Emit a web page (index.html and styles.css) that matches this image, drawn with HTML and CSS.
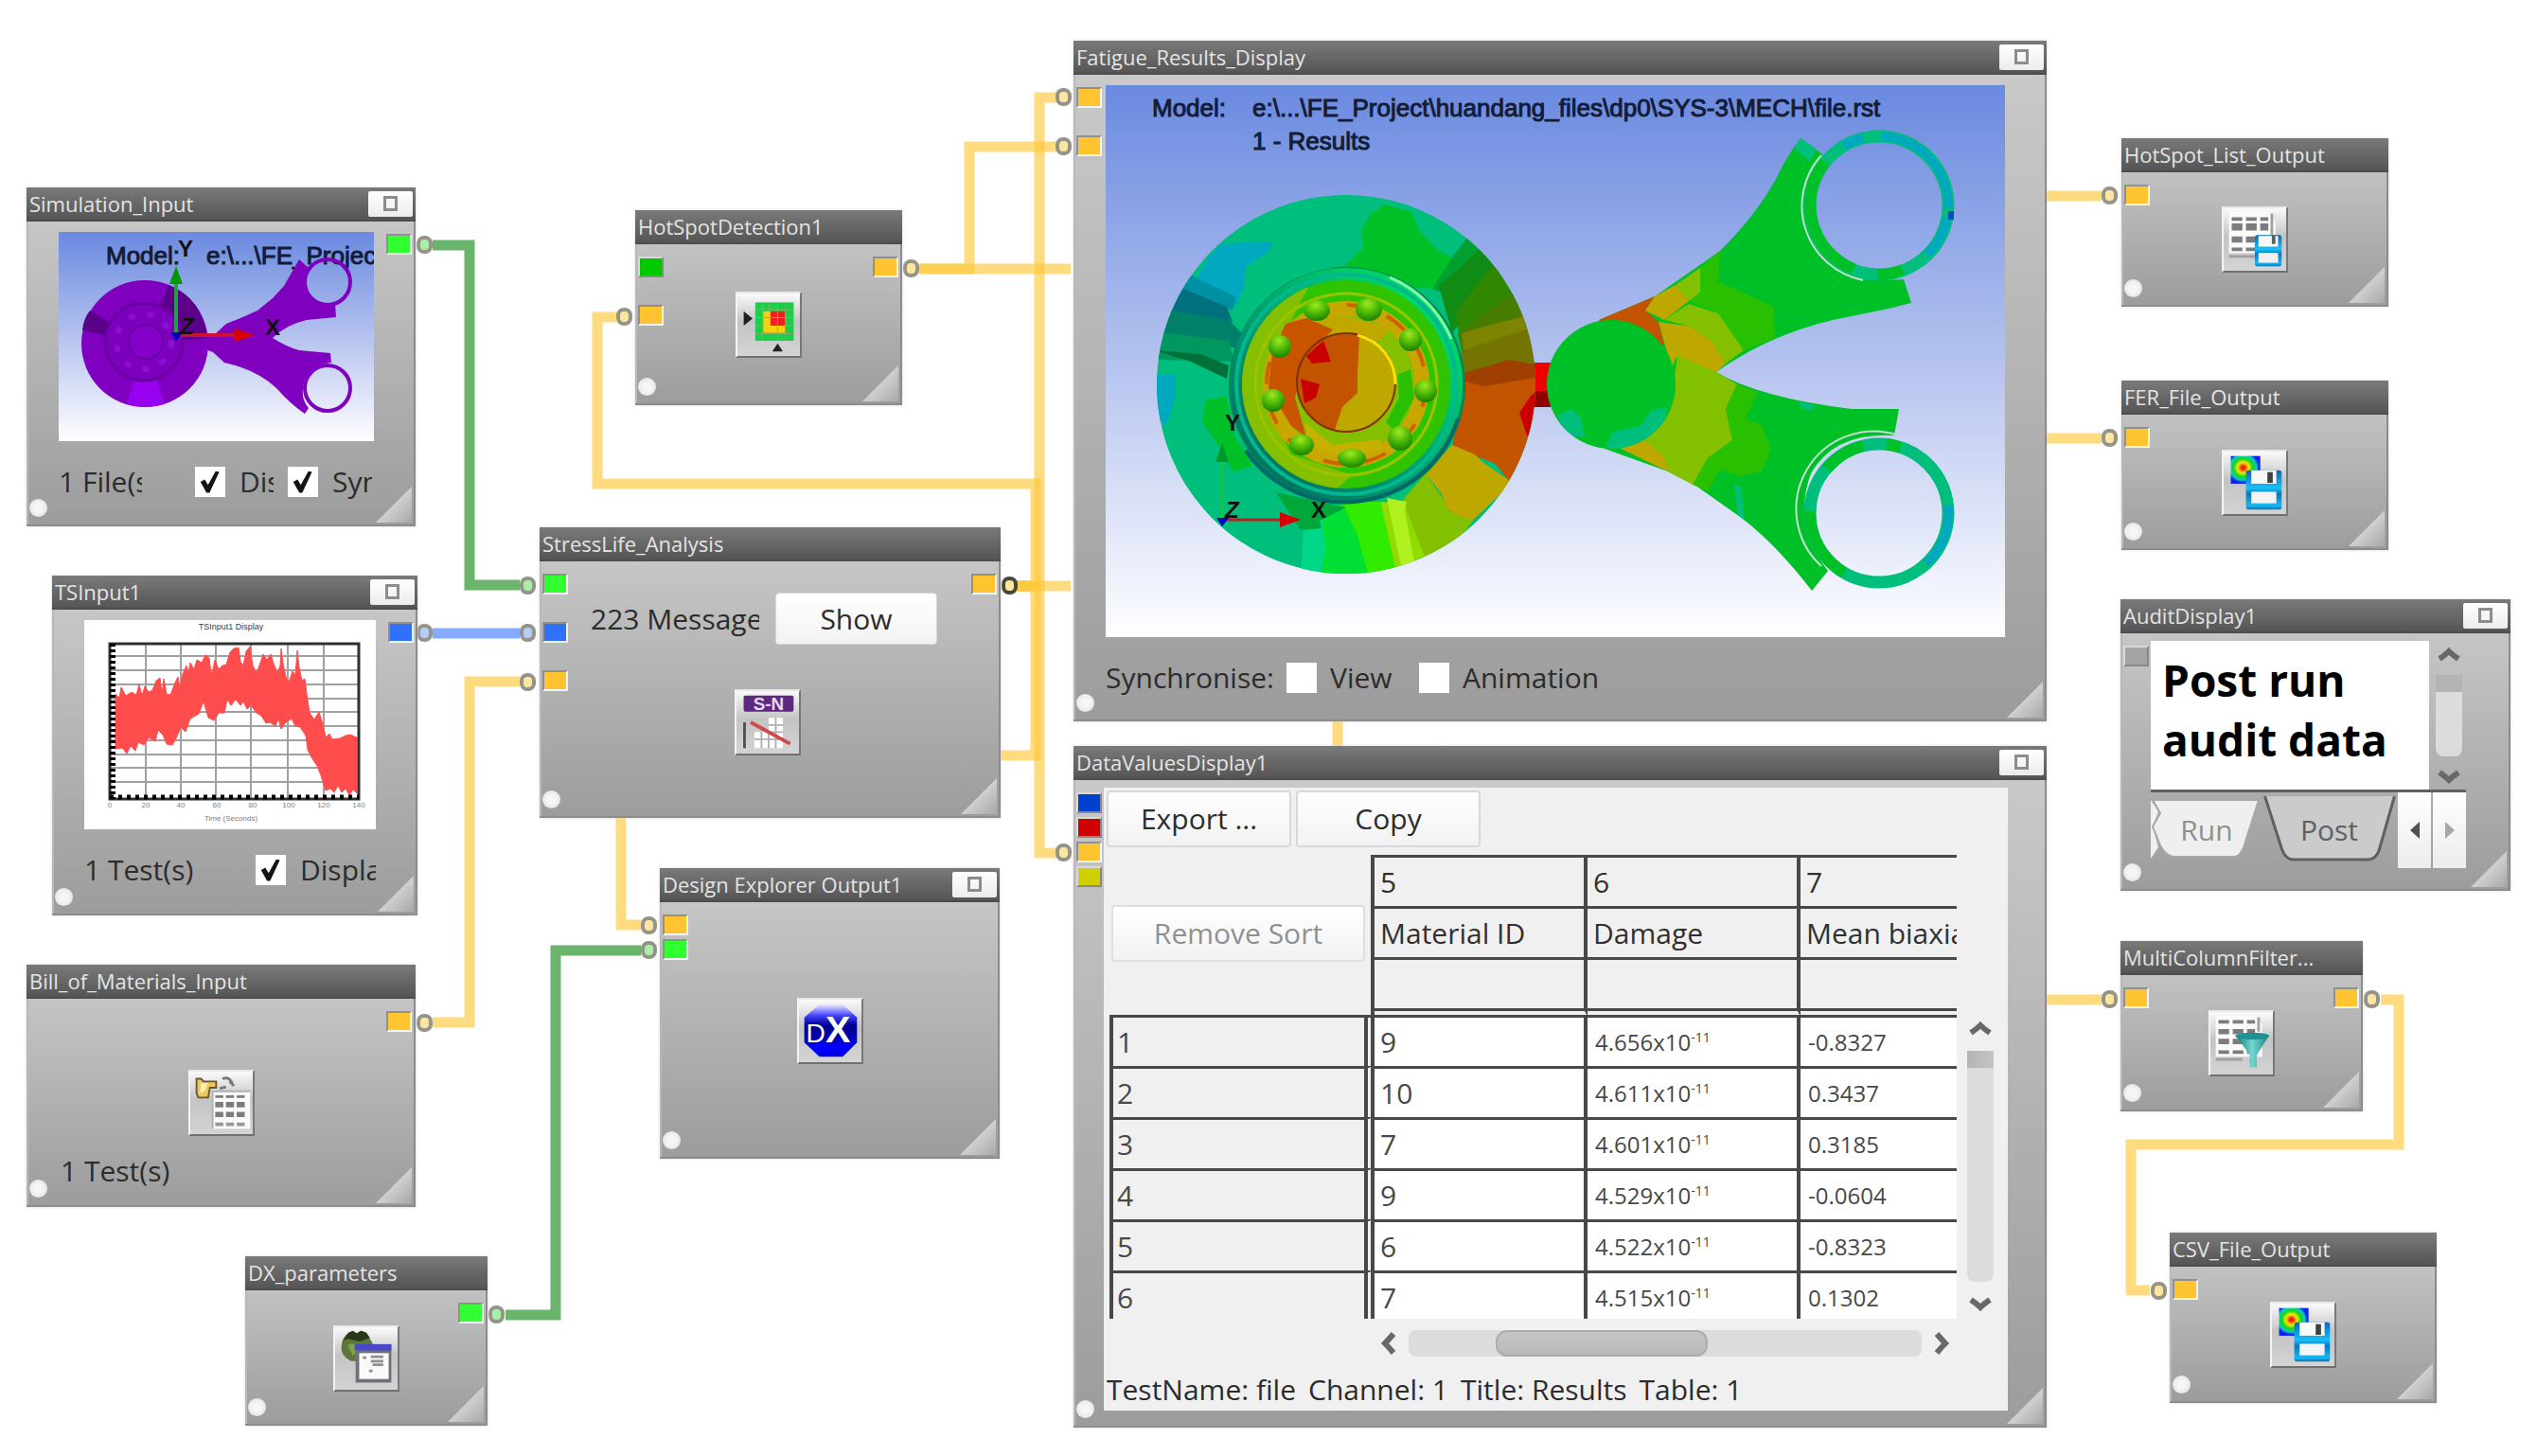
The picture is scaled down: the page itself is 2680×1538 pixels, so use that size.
FILE: index.html
```html
<!DOCTYPE html>
<html lang="en">
<head>
<meta charset="utf-8">
<title>Fatigue analysis process flow</title>
<link rel="stylesheet" href="styles.css">
</head>
<body>
<svg class="defs" aria-hidden="true">
  <defs>
    <linearGradient id="sky" x1="0" y1="0" x2="0" y2="1">
      <stop offset="0" stop-color="#6a8ae0"/><stop offset="0.5" stop-color="#b4c2ee"/><stop offset="1" stop-color="#ffffff"/>
    </linearGradient>
    <linearGradient id="floppyBlue" x1="0" y1="0" x2="0" y2="1">
      <stop offset="0" stop-color="#0a68b0"/><stop offset="0.45" stop-color="#18c0f8"/><stop offset="0.6" stop-color="#0a78c0"/><stop offset="0.9" stop-color="#18b8f0"/><stop offset="1" stop-color="#0a70b8"/>
    </linearGradient>
    <radialGradient id="contour" cx="0.42" cy="0.42" r="0.68">
      <stop offset="0.08" stop-color="#f02010"/><stop offset="0.28" stop-color="#f8e800"/><stop offset="0.48" stop-color="#10d820"/><stop offset="0.66" stop-color="#10c8c0"/><stop offset="0.8" stop-color="#1020f0"/>
    </radialGradient>
    <radialGradient id="ball" cx="0.45" cy="0.25" r="0.75">
      <stop offset="0" stop-color="#a0e820"/><stop offset="0.5" stop-color="#50bc08"/><stop offset="1" stop-color="#1c8000"/>
    </radialGradient>
    <linearGradient id="rim" x1="0" y1="1" x2="1" y2="0">
      <stop offset="0" stop-color="#006058"/><stop offset="0.45" stop-color="#00a070"/><stop offset="1" stop-color="#00f060"/>
    </linearGradient>
    <linearGradient id="dxBlue" x1="0" y1="0" x2="0" y2="1">
      <stop offset="0" stop-color="#f0f0ff"/><stop offset="0.22" stop-color="#4040ff"/><stop offset="0.4" stop-color="#000090"/><stop offset="0.65" stop-color="#0000b0"/><stop offset="0.8" stop-color="#0000ff"/><stop offset="1" stop-color="#0000e8"/>
    </linearGradient>
    <linearGradient id="funnel" x1="0" y1="0" x2="1" y2="0">
      <stop offset="0" stop-color="#107878"/><stop offset="0.5" stop-color="#70d8d0"/><stop offset="1" stop-color="#148080"/>
    </linearGradient>
    <symbol id="fileContour" viewBox="0 0 70 70">
      <rect x="8" y="5" width="33" height="31" fill="url(#contour)"/>
      <rect x="25" y="21" width="40" height="44" rx="3" fill="url(#floppyBlue)"/>
      <rect x="31" y="21" width="28" height="15" fill="#f8f8f8"/><rect x="49" y="23" width="6" height="12" fill="#404040"/>
      <rect x="31" y="45" width="28" height="13" fill="#f4f4f4"/>
    </symbol>
  </defs>
</svg>

<main class="canvas">
  <svg class="cables" aria-hidden="true">
    <g class="cable cable-yellow">
      <path d="M457 1080H496V720H549"/>
      <path d="M971 284H1131"/><path d="M971 284H1024V155H1116"/>
      <path d="M1074 619H1098V103H1116"/><path d="M1074 619H1094V511H631V335H651"/>
      <path d="M1074 619H1094V798H656V977H677"/><path d="M1074 619H1098V901H1116"/><path d="M1103 619H1131"/>
      <path d="M1413 755V795"/>
      <path d="M2155 207H2220"/><path d="M2155 463H2220"/><path d="M2155 1056H2220"/>
      <path d="M2515 1056H2534V1209H2251V1363H2271"/>
    </g>
    <g class="cable cable-green"><path d="M457 259H496V618H549"/><path d="M534 1389H587V1004H677"/></g>
    <g class="cable cable-blue"><path d="M457 669H549"/></g>
    <g class="knob knob-yellow">
      <rect x="442" y="1073" width="13" height="15" rx="6"/><rect x="551" y="713" width="13" height="15" rx="6"/>
      <rect x="956" y="276" width="13" height="15" rx="6"/><rect x="653" y="327" width="13" height="15" rx="6"/>
      <rect x="1060" y="611" width="13" height="15" rx="6" class="knob-dark"/>
      <rect x="1117" y="95" width="13" height="15" rx="6"/><rect x="1117" y="147" width="13" height="15" rx="6"/><rect x="1117" y="893" width="13" height="15" rx="6"/>
      <rect x="679" y="970" width="13" height="15" rx="6"/>
      <rect x="2222" y="199" width="13" height="15" rx="6"/><rect x="2222" y="455" width="13" height="15" rx="6"/><rect x="2222" y="1048" width="13" height="15" rx="6"/>
      <rect x="2499" y="1048" width="13" height="15" rx="6"/><rect x="2274" y="1356" width="13" height="15" rx="6"/>
    </g>
    <g class="knob knob-green">
      <rect x="442" y="251" width="13" height="15" rx="6"/><rect x="551" y="611" width="13" height="15" rx="6"/>
      <rect x="518" y="1381" width="13" height="15" rx="6"/><rect x="679" y="996" width="13" height="15" rx="6"/>
    </g>
    <g class="knob knob-blue"><rect x="442" y="661" width="13" height="15" rx="6"/><rect x="551" y="661" width="13" height="15" rx="6"/></g>
  </svg>

  <section class="node n-sim">
    <header class="node-title"><h2>Simulation_Input</h2><button class="max" aria-label="Maximise Simulation_Input"></button></header>
    <div class="node-body">
      <div class="ports"></div>
      <div class="content">
        <svg class="view view-small" viewBox="0 0 333 221" role="img" aria-label="Model preview">
          <rect width="333" height="221" fill="url(#sky)"/>
          <g class="model-text"><text x="50" y="34">Model:</text><text x="156" y="34">e:\...\FE_Project</text></g>
          <circle cx="91" cy="118" r="67" fill="#8000c0"/>
          <path d="M91 118L25 104Q26 92 33 83Z" fill="#5a0088"/><path d="M91 118L116 56Q152 70 157 112Z" fill="#5c008c"/>
          <path d="M91 118L72 182Q91 187 112 182Z" fill="#9800f0"/>
          <circle cx="90" cy="116" r="41" fill="#7c00bc" stroke="#6a00a0" stroke-width="3"/>
          <circle cx="90" cy="116" r="29" fill="none" stroke="#8c10d0" stroke-width="6" stroke-dasharray="7 13"/>
          <circle cx="92" cy="116" r="18" fill="#8400c8" stroke="#6a00a4" stroke-width="2"/>
          <path d="M155 112L165 108L177 97L192 91L210 83L226 70L238 57L254 29L264 38Q254 56 267 72Q280 82 292 76L293 90L262 93Q240 98 226 112Q240 121 254 125L287 128L288 138Q268 140 260 155Q254 175 264 186L260 192Q245 182 230 165Q210 146 175 138L163 127L155 124Z" fill="#8000c0"/>
          <circle cx="284" cy="53" r="24" fill="none" stroke="#8000c0" stroke-width="4"/>
          <circle cx="284" cy="165" r="24" fill="none" stroke="#8000c0" stroke-width="4"/>
          <path d="M124 108V52" stroke="#20a040" stroke-width="4"/><path d="M124 36L131 55H117Z" fill="#009800"/>
          <path d="M124 109H190" stroke="#d01030" stroke-width="4"/><path d="M207 109L186 102V116Z" fill="#d80000"/>
          <path d="M118 106H131L124 116Z" fill="#0000c0"/>
          <g class="axis-text"><text x="126" y="26">Y</text><text x="218" y="109">X</text><text x="128" y="108" class="italic">Z</text></g>
        </svg>
        <div class="row row-sim">
          <span class="clip">1 File(s)</span>
          <input type="checkbox" id="simDisplay" checked><label class="clip" for="simDisplay">Display</label>
          <input type="checkbox" id="simSync" checked><label class="clip" for="simSync">Synch</label>
        </div>
      </div>
      <div class="ports ports-out"><i class="port lime"></i></div>
    </div>
    <i class="dot"></i><i class="grip"></i>
  </section>

  <section class="node n-ts">
    <header class="node-title"><h2>TSInput1</h2><button class="max" aria-label="Maximise TSInput1"></button></header>
    <div class="node-body">
      <div class="ports"></div>
      <div class="content">
        <svg class="view view-small" viewBox="0 0 308 221" role="img" aria-label="Time series chart">
          <rect width="308" height="221" fill="#fff"/>
          <g class="tiny"><text x="155" y="10">TSInput1 Display</text><text x="155" y="212" class="faint">Time (Seconds)</text></g>
          <g class="tiny faint"><text x="27" y="198">0</text><text x="65" y="198">20</text><text x="102" y="198">40</text><text x="140" y="198">60</text><text x="178" y="198">80</text><text x="216" y="198">100</text><text x="253" y="198">120</text><text x="290" y="198">140</text></g>
          <path d="M65 25V189M102 25V189M139 25V189M176 25V189M215 25V189M253 25V189M27 38H290M27 53H290M27 68H290M27 83H290M27 97H290M27 112H290M27 127H290M27 142H290M27 156H290M27 171H290" stroke="#a0a0a0" stroke-width="2" fill="none"/>
          <path d="M33 78L37 82L39 71L44 80L50 76L55 79L58 68L61 80L64 70L68 76L72 74L76 64L80 61L82 78L84 62L87 78L91 79L96 66L99 60L101 72L104 57L108 48L110 56L112 45L116 52L119 42L124 45L128 37L132 40L134 58L136 52L138 42L142 52L146 48L150 47L154 34L158 30L163 29L165 44L168 48L171 33L175 28L178 48L182 56L186 45L189 36L193 42L197 36L200 46L204 56L207 48L208 30L210 46L213 60L216 66L220 54L223 58L225 32L227 50L230 64L233 62L235 78L238 98L243 105L248 97L252 110L255 124L259 120L262 126L270 125L276 122L281 121L288 124V183L284 179L280 185L276 178L272 182L268 175L264 182L260 178L255 180L250 164L246 154L240 145L236 137L234 122L228 113L223 112L219 104L213 108L208 115L205 104L202 112L196 108L192 109L187 101L182 98L176 90L172 94L168 86L165 90L160 84L155 90L151 84L148 98L142 98L137 106L131 103L126 86L121 99L112 104L107 118L102 113L97 125L93 132L87 131L83 121L78 116L75 128L68 124L63 132L57 129L54 138L49 133L45 141L40 135L33 136Z" fill="#ff4d4d" stroke="#ff4d4d" stroke-width="1"/>
          <path d="M27 25H290V189H27Z" fill="none" stroke="#303030" stroke-width="3"/>
          <path d="M30 25V189" stroke="#000" stroke-width="6" stroke-dasharray="3 3"/><path d="M27 187H290" stroke="#000" stroke-width="5" stroke-dasharray="4 5"/>
        </svg>
        <div class="row row-ts">
          <span class="clip">1 Test(s)</span>
          <input type="checkbox" id="tsDisplay" checked><label class="clip" for="tsDisplay">Display</label>
        </div>
      </div>
      <div class="ports ports-out"><i class="port blue"></i></div>
    </div>
    <i class="dot"></i><i class="grip"></i>
  </section>

  <section class="node n-bill">
    <header class="node-title"><h2>Bill_of_Materials_Input</h2></header>
    <div class="node-body with-icon">
      <div class="ports"></div>
      <div class="content">
        <svg class="icon" viewBox="0 0 70 70" aria-hidden="true">
          <path d="M7 8H12L15 11H29V18H22L20 29H9L7 24Z" fill="#e8c860" stroke="#6c5828" stroke-width="2"/><path d="M12 13H20L16 22L11 24Z" fill="#fff0b0"/>
          <path d="M36 8Q44 5 47 13M49 16L44 11M33 19L40 17" fill="none" stroke="#787878" stroke-width="3"/>
          <rect x="25" y="22" width="42" height="42" fill="#fafafa"/><path d="M25 64V22H67" fill="none" stroke="#b0b0b0" stroke-width="2"/>
          <g stroke="#7c7c7c" stroke-dasharray="9 3"><path d="M28 28H64" stroke-width="3"/><path d="M28 37H64" stroke-width="6"/><path d="M28 48H64" stroke-width="6"/><path d="M28 59H64" stroke-width="4" stroke="#989898"/></g>
        </svg>
        <span class="note">1 Test(s)</span>
      </div>
      <div class="ports ports-out"><i class="port orange"></i></div>
    </div>
    <i class="dot"></i><i class="grip"></i>
  </section>

  <section class="node n-dx">
    <header class="node-title"><h2>DX_parameters</h2></header>
    <div class="node-body with-icon">
      <div class="ports"></div>
      <div class="content">
        <svg class="icon" viewBox="0 0 70 70" aria-hidden="true">
          <path d="M15 6L20 4L24 7L29 4L35 6L42 18V24L26 38L18 38Q6 32 7 22Q7 12 15 6Z" fill="#5c7838"/><path d="M15 6L20 4L24 7L29 4L35 6L39 12L28 16L14 13L9 15Z" fill="#283818"/><path d="M14 20Q22 16 26 24L20 32Z" fill="#80a050"/>
          <rect x="23" y="19" width="40" height="43" fill="#707078"/><rect x="22" y="19" width="41" height="7" fill="#4848c8"/><rect x="27" y="29" width="33" height="29" fill="#fafafa"/>
          <path d="M31 34H35M40 33H54M40 38H54M42 42H54M38 49H42" stroke="#909090" stroke-width="3"/>
        </svg>
      </div>
      <div class="ports ports-out"><i class="port lime"></i></div>
    </div>
    <i class="dot"></i><i class="grip"></i>
  </section>

  <section class="node n-hot">
    <header class="node-title"><h2>HotSpotDetection1</h2></header>
    <div class="node-body with-icon">
      <div class="ports"><i class="port green"></i><i class="port orange"></i></div>
      <div class="content">
        <svg class="icon" viewBox="0 0 70 70" aria-hidden="true">
          <rect x="20" y="10" width="43" height="43" fill="#18d048"/><rect x="29" y="20" width="24" height="24" fill="#f8d010"/><rect x="37" y="20" width="16" height="16" fill="#f02020"/>
          <path d="M28 10V53M36 10V20M45 10V53M54 10V53M20 18H63M20 27H63M20 36H28M54 36H63M20 45H63" stroke="#90a870" stroke-width="1"/>
          <path d="M7 20L17 28L7 36Z" fill="#202020"/><path d="M39 65L45 56L51 65Z" fill="#202020"/>
        </svg>
      </div>
      <div class="ports ports-out"><i class="port orange"></i></div>
    </div>
    <i class="dot"></i><i class="grip"></i>
  </section>

  <section class="node n-stress">
    <header class="node-title"><h2>StressLife_Analysis</h2></header>
    <div class="node-body with-icon">
      <div class="ports"><i class="port lime"></i><i class="port blue"></i><i class="port orange"></i></div>
      <div class="content">
        <div class="row row-messages"><span class="clip">223 Messages</span><button class="btn">Show</button></div>
        <svg class="icon" viewBox="0 0 70 70" aria-hidden="true">
          <rect x="8" y="5" width="56" height="18" rx="2" fill="#5c2880"/><text x="36" y="21" class="sn">S-N</text>
          <path d="M9 35V64" stroke="#505050" stroke-width="3"/><path d="M36 30H52V64H20V46H36Z" fill="#fff"/><path d="M20 54H52M28 46V64M36 38H52M36 46H52M44 30V64M36 46V64" stroke="#b0b0b0" stroke-width="2"/>
          <path d="M16 35L60 59" stroke="#d04848" stroke-width="4"/>
        </svg>
      </div>
      <div class="ports ports-out"><i class="port orange"></i></div>
    </div>
    <i class="dot"></i><i class="grip"></i>
  </section>

  <section class="node n-design">
    <header class="node-title"><h2>Design Explorer Output1</h2><button class="max" aria-label="Maximise Design Explorer Output1"></button></header>
    <div class="node-body with-icon">
      <div class="ports tight"><i class="port orange"></i><i class="port lime"></i></div>
      <div class="content">
        <svg class="icon" viewBox="0 0 70 70" aria-hidden="true">
          <path d="M23 5H49L65 20V48L49 64H23L6 48V20Z" fill="url(#dxBlue)"/>
          <text x="8" y="48" class="dx">D<tspan class="dx-x">X</tspan></text>
        </svg>
      </div>
      <div class="ports"></div>
    </div>
    <i class="dot"></i><i class="grip"></i>
  </section>

  <section class="node n-fatigue">
    <header class="node-title"><h2>Fatigue_Results_Display</h2><button class="max" aria-label="Maximise Fatigue_Results_Display"></button></header>
    <div class="node-body">
      <div class="ports"><i class="port orange"></i><i class="port orange"></i></div>
      <div class="content">
        <svg class="view view-large" viewBox="0 0 950 583" role="img" aria-label="Fatigue life contour plot">
          <clipPath id="discClip"><circle cx="254" cy="316" r="200"/></clipPath>
          <clipPath id="raceClip"><circle cx="254" cy="316" r="110"/></clipPath>
          <clipPath id="hubClip"><circle cx="254" cy="314" r="52"/></clipPath>
          <clipPath id="capClip"><circle cx="534" cy="316" r="68"/></clipPath>
          <rect width="950" height="583" fill="url(#sky)"/>
          <g class="model-text"><text x="49" y="33">Model:</text><text x="155" y="33">e:\...\FE_Project\huandang_files\dp0\SYS-3\MECH\file.rst</text><text x="155" y="68">1 - Results</text></g>
          <rect x="450" y="293" width="20" height="30" fill="#f00000"/><rect x="450" y="323" width="20" height="17" fill="#900000"/>
          <g clip-path="url(#discClip)">
            <rect x="50" y="110" width="410" height="410" fill="#00be7c"/>
            <path d="M200 208L235 194L254 190L266 177L272 172L270 153L280 136L295 126L323 134L331 153L348 172L366 182L350 215Z" fill="#00c028"/>
            <path d="M366 182L390 150L420 170L380 230L345 215Z" fill="#00a030"/>
            <path d="M352 212L405 165L430 190L390 230L366 262Z" fill="#108c14"/>
            <path d="M370 240L420 175L460 230L375 275Z" fill="#2f8800"/><path d="M372 262L450 205L465 250L378 290Z" fill="#487c00"/>
            <path d="M376 282L450 236L470 300L377 308Z" fill="#747400"/><path d="M376 262L410 252L470 238L462 252L378 280Z" fill="#7c8400"/>
            <path d="M377 304L410 295L425 290L460 296V320L377 322Z" fill="#a04000"/>
            <path d="M376 312L400 318L460 308V420L427 420L412 400L366 382L372 350Z" fill="#c25400"/><path d="M460 320L449 328L437 346L445 370H460Z" fill="#c80000"/>
            <path d="M366 380L390 390L398 398L430 420L385 462L360 448L355 432L338 410Z" fill="#bea800"/>
            <path d="M338 410L355 435L362 450L388 460L340 525L312 440Z" fill="#82c000"/>
            <path d="M290 440L315 442L340 505L308 520Z" fill="#90dc00"/><path d="M297 436L318 440L316 450L326 504L312 508Z" fill="#b0f020"/>
            <path d="M246 440L290 440L308 520H278Z" fill="#32ec00"/><path d="M226 444L250 442L266 475L278 520H226Q236 490 224 470Z" fill="#00e034"/>
            <path d="M210 452L228 450L232 490L226 520H206Z" fill="#00d888"/>
            <path d="M110 180L123 167L177 165L170 178L148 191L146 213L138 232L95 205Z" fill="#00a8c0"/>
            <path d="M80 196L138 224L134 238L78 215Z" fill="#0090a4"/><path d="M70 210L128 234L134 250L60 240Z" fill="#00707e"/>
            <path d="M60 236L130 248L146 264L140 278L50 262Z" fill="#008068"/><path d="M50 260L130 270L136 292L50 290Z" fill="#009860"/><path d="M52 280L100 284L130 296L128 310L90 292Z" fill="#007038"/>
            <path d="M50 305H73L74 328L64 360L50 350Z" fill="#00a8c0"/>
            <path d="M105 333L127 328L137 372L156 402L134 408L124 388L102 356Z" fill="#00c028"/>
            <path d="M180 430L254 446L226 460L228 468L206 470L190 446Z" fill="#00a83c"/>
          </g>
          <circle cx="255" cy="317" r="125" fill="#008850"/><circle cx="254" cy="316" r="123" fill="url(#rim)"/>
          <circle cx="254" cy="316" r="116" fill="none" stroke="#00b890" stroke-width="4"/>
          <path d="M148 386A126 126 0 0 0 372 352" fill="none" stroke="#006868" stroke-width="4"/>
          <path d="M300 203A121 121 0 0 1 365 268" fill="none" stroke="#80ffa8" stroke-width="3"/>
          <g clip-path="url(#raceClip)">
            <rect x="144" y="206" width="220" height="220" fill="#30c400"/>
            <path d="M144 206H218L200 240L180 290L176 350L196 390L260 412L240 430H144Z" fill="#84c000"/>
            <circle cx="254" cy="316" r="80" fill="none" stroke="#c8a800" stroke-width="16"/>
            <circle cx="254" cy="316" r="84" fill="none" stroke="#d06000" stroke-width="4" stroke-dasharray="24 20"/>
            <circle cx="254" cy="316" r="72" fill="#84c000"/>
            <path d="M254 244A72 72 0 0 0 190 282L200 300L215 275L254 262L290 270L300 256Z" fill="#c0a800"/>
            <path d="M176 282L190 252L212 246L240 258L210 290L200 330L212 372L196 360L172 320Z" fill="#c85400"/>
            <path d="M210 356L240 380L290 374L292 384L254 392L214 382Z" fill="#c8b000"/>
            <path d="M308 306L322 300L326 330L306 366L296 356L310 330Z" fill="#28c000"/>
          </g>
          <circle cx="254" cy="316" r="96" fill="none" stroke="#98c400" stroke-width="3"/>
          <g fill="url(#ball)"><ellipse cx="223" cy="238" rx="14" ry="11"/><ellipse cx="278" cy="237" rx="14" ry="12"/><circle cx="322" cy="269" r="12"/><circle cx="338" cy="323" r="12"/><circle cx="311" cy="373" r="13"/><ellipse cx="260" cy="394" rx="15" ry="10"/><ellipse cx="207" cy="380" rx="13" ry="11"/><circle cx="177" cy="333" r="12"/><circle cx="184" cy="276" r="12"/></g>
          <g clip-path="url(#hubClip)"><rect x="200" y="260" width="110" height="110" fill="#c25400"/><path d="M268 264H310V370H240L250 340L266 325L266 305Z" fill="#bea800"/><path d="M212 286L230 270L238 292L218 294ZM206 310L226 316L222 330L210 336Z" fill="#c80000"/></g>
          <circle cx="254" cy="314" r="52" fill="none" stroke="#803000" stroke-width="2"/><path d="M266 264A52 52 0 0 1 306 316" fill="none" stroke="#ffe000" stroke-width="3"/>

          <path d="M521 248L580 223L649 175Q689 135 709 97Q720 74 734 56L760 75Q725 120 750 170Q780 210 843 205L851 230L827 236L768 248Q700 264 645 303Q690 330 788 342H838L833 370Q770 366 745 410Q725 465 763 513L746 534Q709 486 673 458L622 422L594 408L527 384Z" fill="#00c028"/>
          <path d="M521 248L580 223L570 238L584 250L590 275L560 270Z" fill="#c25400"/>
          <path d="M570 238L580 223L602 211L616 228L590 248Z" fill="#bea800"/><path d="M602 211L628 193V219L616 228Z" fill="#82c000"/>
          <path d="M628 193L649 175L647 208L669 217L705 234L707 267L674 280L647 241L616 228L628 219Z" fill="#28c000"/>
          <path d="M590 248L616 231L647 241L674 280L655 294L641 271L618 255Z" fill="#82c000"/>
          <path d="M584 250L618 255L641 271L655 294L645 303L602 288L598 300Z" fill="#bea800"/>
          <path d="M604 285L645 303L667 316L655 342L662 375L636 394L620 422L594 408L590 392L560 375L598 330Z" fill="#82c000"/>
          <path d="M667 316L689 324L676 352L693 359L703 385L693 408L669 413L649 406L636 429L620 422L636 394L662 375L655 342Z" fill="#28c000"/>
          <path d="M540 382L570 376L590 392L594 408Z" fill="#bea800"/>
          <path d="M734 56L728 67L744 81L750 67ZM664 422L671 424L675 460L668 454ZM732 334L750 338L746 343L736 342Z" fill="#00be7c"/>
          <circle cx="534" cy="316" r="68" fill="#00c028"/>
          <g clip-path="url(#capClip)" fill="#00be7c"><path d="M478 348L492 342L502 352L506 372L480 370Z"/><path d="M528 384L536 366L565 360L576 344L592 340V384Z"/></g>
          <g fill="none">
            <circle cx="817" cy="127" r="73" stroke="#00be7c" stroke-width="13"/><circle cx="817" cy="452" r="73" stroke="#00be7c" stroke-width="13"/>
            <path d="M760 81A73 73 0 0 0 790 194M815 200A73 73 0 0 0 842 195M762 405A73 73 0 0 1 800 381M744 450A73 73 0 0 0 780 515M825 379A73 73 0 0 1 840 383" stroke="#00c028" stroke-width="12"/>
            <path d="M780 64A73 73 0 0 1 800 56M820 54A73 73 0 0 1 890 130M889 140A73 73 0 0 1 867 179M890 444A73 73 0 0 1 867 505" stroke="#00a8c0" stroke-width="9"/>
            <path d="M893 133V142" stroke="#0050c0" stroke-width="6"/>
            <path d="M756 74A80 80 0 0 0 800 206M838 370A82 82 0 0 0 756 508" stroke="#c0e0d0" stroke-width="2"/>
          </g>
          <path d="M123 460V395" stroke="#10c840" stroke-width="3"/><path d="M123 378L130 398H116Z" fill="#009828"/>
          <path d="M123 459H188" stroke="#c02020" stroke-width="3"/><path d="M206 459L184 451V467Z" fill="#d80000"/><path d="M117 457H130L123 466Z" fill="#0000c0"/>
          <g class="axis-text"><text x="126" y="365">Y</text><text x="217" y="457">X</text><text x="126" y="457" class="italic">Z</text></g>
        </svg>
        <div class="row row-fatigue">
          <span>Synchronise:</span>
          <input type="checkbox" id="syncView"><label for="syncView">View</label>
          <input type="checkbox" id="syncAnim"><label for="syncAnim">Animation</label>
        </div>
      </div>
      <div class="ports"></div>
    </div>
    <i class="dot"></i><i class="grip"></i>
  </section>

  <section class="node n-data">
    <header class="node-title"><h2>DataValuesDisplay1</h2><button class="max" aria-label="Maximise DataValuesDisplay1"></button></header>
    <div class="node-body">
      <div class="ports tight"><i class="port navy"></i><i class="port red"></i><i class="port orange"></i><i class="port olive"></i></div>
      <div class="panel">
        <div class="toolbar"><button class="btn">Export ...</button><button class="btn">Copy</button></div>
        <div class="grid-area">
          <div class="table-clip">
            <table>
              <colgroup><col class="c-row"><col class="c-val"><col class="c-val"><col class="c-val"></colgroup>
              <thead>
                <tr><td rowspan="3" class="corner"><button class="btn btn-wide" disabled>Remove Sort</button></td><th>5</th><th>6</th><th>7</th></tr>
                <tr><th>Material ID</th><th>Damage</th><th>Mean biaxiality</th></tr>
                <tr class="last"><th></th><th></th><th></th></tr>
              </thead>
              <tbody>
                <tr><th scope="row">1</th><td>9</td><td class="num">4.656x10<sup>-11</sup></td><td class="num">-0.8327</td></tr>
                <tr><th scope="row">2</th><td>10</td><td class="num">4.611x10<sup>-11</sup></td><td class="num">0.3437</td></tr>
                <tr><th scope="row">3</th><td>7</td><td class="num">4.601x10<sup>-11</sup></td><td class="num">0.3185</td></tr>
                <tr><th scope="row">4</th><td>9</td><td class="num">4.529x10<sup>-11</sup></td><td class="num">-0.0604</td></tr>
                <tr><th scope="row">5</th><td>6</td><td class="num">4.522x10<sup>-11</sup></td><td class="num">-0.8323</td></tr>
                <tr><th scope="row">6</th><td>7</td><td class="num">4.515x10<sup>-11</sup></td><td class="num">0.1302</td></tr>
              </tbody>
            </table>
          </div>
          <div class="vscroll">
            <button class="arrow" aria-label="Scroll up"><svg viewBox="0 0 28 18"><path d="M4 13Q10 9 14 5Q18 9 24 13"/></svg></button>
            <div class="track"><div class="thumb"></div></div>
            <button class="arrow" aria-label="Scroll down"><svg viewBox="0 0 28 18"><path d="M4 5Q10 9 14 13Q18 9 24 5"/></svg></button>
          </div>
        </div>
        <div class="hscroll">
          <button class="arrow" aria-label="Scroll left"><svg viewBox="0 0 18 28"><path d="M14 4Q9 10 5 14Q9 18 14 24"/></svg></button>
          <div class="track"><div class="thumb"></div></div>
          <button class="arrow" aria-label="Scroll right"><svg viewBox="0 0 18 28"><path d="M4 4Q9 10 13 14Q9 18 4 24"/></svg></button>
        </div>
        <p class="status"><span>TestName: file</span><span>Channel: 1</span><span>Title: Results</span><span>Table: 1</span></p>
      </div>
      <div class="ports"></div>
    </div>
    <i class="dot"></i><i class="grip"></i>
  </section>

  <section class="node n-list">
    <header class="node-title"><h2>HotSpot_List_Output</h2></header>
    <div class="node-body with-icon">
      <div class="ports"><i class="port orange"></i></div>
      <div class="content">
        <svg class="icon" viewBox="0 0 70 70" aria-hidden="true">
          <path d="M6 4H50L58 14V50H6Z" fill="#fafafa"/><path d="M6 54H36M54 6V30" stroke="#a0a0a0" stroke-width="3"/>
          <g stroke="#7c7c7c" stroke-dasharray="12 4" stroke-width="4"><path d="M9 12H50"/><path d="M9 21H50" stroke-width="8"/><path d="M9 35H50" stroke-width="7"/><path d="M9 46H50"/></g>
          <rect x="35" y="30" width="30" height="35" rx="3" fill="url(#floppyBlue)"/><rect x="39" y="31" width="22" height="12" fill="#f8f8f8"/><rect x="54" y="30" width="4" height="10" fill="#606060"/><rect x="39" y="50" width="22" height="11" fill="#f0f0f0"/>
        </svg>
      </div>
      <div class="ports"></div>
    </div>
    <i class="dot"></i><i class="grip"></i>
  </section>

  <section class="node n-fer">
    <header class="node-title"><h2>FER_File_Output</h2></header>
    <div class="node-body with-icon">
      <div class="ports"><i class="port orange"></i></div>
      <div class="content"><svg class="icon" aria-hidden="true"><use href="#fileContour"/></svg></div>
      <div class="ports"></div>
    </div>
    <i class="dot"></i><i class="grip"></i>
  </section>

  <section class="node n-audit">
    <header class="node-title"><h2>AuditDisplay1</h2><button class="max" aria-label="Maximise AuditDisplay1"></button></header>
    <div class="node-body">
      <div class="ports"><i class="port gray"></i></div>
      <div class="content">
        <div class="audit-view">
          <p class="audit-text">Post run<br>audit data</p>
          <div class="vscroll">
            <button class="arrow" aria-label="Scroll up"><svg viewBox="0 0 28 18"><path d="M4 13Q10 9 14 5Q18 9 24 13"/></svg></button>
            <div class="track"><div class="thumb"></div></div>
            <button class="arrow" aria-label="Scroll down"><svg viewBox="0 0 28 18"><path d="M4 5Q10 9 14 13Q18 9 24 5"/></svg></button>
          </div>
        </div>
        <div class="tabs">
          <button class="tab tab-run"><svg viewBox="0 0 118 80" aria-hidden="true"><path d="M0 8L8 20L2 36L8 58L0 70" fill="#f0f0f0"/><path d="M2 8H114L98 58Q94 68 88 68H24Q15 66 10 56L2 36L10 22Z" fill="#efefef" stroke="#a8a8a8" stroke-width="2"/></svg><span>Run</span></button>
          <button class="tab tab-post"><svg viewBox="0 0 140 80" aria-hidden="true"><path d="M2 4L20 60Q24 71 32 71H112Q120 70 123 60L139 4" fill="#cbcbcb" stroke="#606060" stroke-width="3"/></svg><span>Post</span></button>
          <button class="step" aria-label="Previous tab"><svg viewBox="0 0 12 18"><path d="M11 0V18L1 9Z" fill="#505050"/></svg></button>
          <button class="step" aria-label="Next tab"><svg viewBox="0 0 12 18"><path d="M1 0V18L11 9Z" fill="#a8a8a8"/></svg></button>
        </div>
      </div>
      <div class="ports"></div>
    </div>
    <i class="dot"></i><i class="grip"></i>
  </section>

  <section class="node n-filter">
    <header class="node-title"><h2>MultiColumnFilter...</h2></header>
    <div class="node-body with-icon">
      <div class="ports"><i class="port orange"></i></div>
      <div class="content">
        <svg class="icon" viewBox="0 0 70 70" aria-hidden="true">
          <path d="M6 4H50L58 14V50H6Z" fill="#fafafa"/><path d="M6 53H36M54 6V22" stroke="#a0a0a0" stroke-width="3"/>
          <g stroke="#7c7c7c" stroke-dasharray="12 4" stroke-width="4"><path d="M9 11H50"/><path d="M9 22H50" stroke-width="6"/><path d="M9 33H50" stroke-width="6"/><path d="M9 45H50"/></g>
          <path d="M28 26H66L52 48V62H44V48Z" fill="url(#funnel)"/><ellipse cx="47" cy="27" rx="19" ry="4" fill="#209090"/>
        </svg>
      </div>
      <div class="ports ports-out"><i class="port orange"></i></div>
    </div>
    <i class="dot"></i><i class="grip"></i>
  </section>

  <section class="node n-csv">
    <header class="node-title"><h2>CSV_File_Output</h2></header>
    <div class="node-body with-icon">
      <div class="ports"><i class="port orange"></i></div>
      <div class="content"><svg class="icon" aria-hidden="true"><use href="#fileContour"/></svg></div>
      <div class="ports"></div>
    </div>
    <i class="dot"></i><i class="grip"></i>
  </section>
</main>
</body>
</html>
```
FILE: styles.css
```css
*, *::before { box-sizing: border-box; }

body {
  margin: 0;
  background: #fff;
  color: #2c2c2c;
  font: 30px/40px "Open Sans", "Noto Sans", sans-serif;
}

button { font: inherit; color: inherit; padding: 0; border: 0; background: none; }
p, h2 { margin: 0; }
.defs { position: absolute; width: 0; height: 0; }

/* Free canvas holding the nodes and the cables between them */
.canvas { position: relative; min-height: 100vh; overflow: hidden; }
.cables { position: absolute; inset: 0; width: 100%; height: 100%; }
.cable { fill: none; stroke-width: 11; stroke-opacity: 0.65; }
.cable-yellow { stroke: #ffc83c; }
.cable-green { stroke: #1c8c1c; }
.cable-blue { stroke: #4080ff; }
.knob { stroke: #949488; stroke-width: 4; }
.knob-yellow { fill: #ffe6a0; }
.knob-green { fill: #a8f0a8; }
.knob-blue { fill: #b4ccff; }
.knob-dark { stroke: #484838; }

.node {
  position: absolute;
  display: flex;
  flex-direction: column;
  background: linear-gradient(#cbcbcb, #9c9c9c);
  box-shadow: inset -2px -2px 0 #8c8c8c, inset 2px 0 0 #b8b8b8, 0 0 3px #d8d8d8;
}

.n-sim { left: 28px; top: 198px; width: 411px; height: 358px; }
.n-ts { left: 55px; top: 608px; width: 386px; height: 359px; }
.n-bill { left: 28px; top: 1019px; width: 411px; height: 256px; }
.n-dx { left: 259px; top: 1327px; width: 256px; height: 179px; }
.n-hot { left: 671px; top: 222px; width: 282px; height: 206px; }
.n-stress { left: 570px; top: 557px; width: 487px; height: 307px; }
.n-design { left: 697px; top: 917px; width: 359px; height: 307px; }
.n-fatigue { left: 1134px; top: 43px; width: 1028px; height: 719px; }
.n-data { left: 1134px; top: 788px; width: 1028px; height: 720px; }
.n-list { left: 2241px; top: 146px; width: 282px; height: 178px; }
.n-fer { left: 2241px; top: 402px; width: 282px; height: 179px; }
.n-audit { left: 2240px; top: 633px; width: 412px; height: 308px; }
.n-filter { left: 2240px; top: 994px; width: 256px; height: 180px; }
.n-csv { left: 2292px; top: 1302px; width: 282px; height: 180px; }

.node-title {
  display: flex;
  justify-content: space-between;
  align-items: center;
  height: 36px;
  padding: 0 3px;
  background: linear-gradient(#7a7a7a, #555);
  border-bottom: 2px solid #4c4c4c;
}
.node-title h2 { font-size: 22px; line-height: 30px; font-weight: 400; color: #e4e4e4; white-space: nowrap; }

.max {
  width: 47px;
  height: 27px;
  display: grid;
  place-items: center;
  background: linear-gradient(#fff, #ececec);
  border-radius: 2px;
}
.max::before { content: ""; width: 15px; height: 16px; border: 3px solid #8c8c8c; }

.node-body { flex: 1; display: grid; grid-template-columns: 34px 1fr 44px; min-height: 0; }
.with-icon { grid-template-columns: 44px 1fr 44px; }
.n-data .node-body { grid-template-columns: 32px 1fr 41px; }
.n-audit .node-body { grid-template-columns: 32px 1fr 47px; }

.ports { display: flex; flex-direction: column; gap: 29px; padding: 13px 0 0 3px; }
.ports.tight { gap: 4px; }
.ports-out { align-items: flex-end; padding-right: 4px; }
.port {
  width: 27px;
  height: 22px;
  border: 2px solid;
  border-color: #909090 #f4f4f4 #f4f4f4 #909090;
  background: #ffc430;
}
.lime { background: #30ff30; }
.blue { background: #3070ff; }
.green, .navy, .red, .olive, .gray { border-color: #d8d8d8 #888 #888 #d8d8d8; }
.green { background: #00c800; }
.navy { background: #0040d0; }
.red { background: #d00000; }
.olive { background: #d0d000; }
.gray { background: #a4a4a4; }

.dot {
  position: absolute;
  left: 3px;
  bottom: 10px;
  width: 19px;
  height: 19px;
  border-radius: 50%;
  background: radial-gradient(#f6f6f6 30%, #dcdcdc);
}
.grip {
  position: absolute;
  right: 4px;
  bottom: 4px;
  width: 38px;
  height: 38px;
  background: linear-gradient(135deg, #d8d8d8 40%, #a8a8a8);
  clip-path: polygon(100% 0, 100% 100%, 0 100%);
}

.content { min-width: 0; display: flex; flex-direction: column; padding-top: 11px; }
.view { display: block; width: 100%; flex: none; }
.view-small { height: 221px; }
.view-large { height: 583px; }
.model-text { font: 26px "Liberation Sans", Arial, sans-serif; fill: #141c38; stroke: #141c38; stroke-width: 1; }
.axis-text { font: bold 24px "Liberation Sans", Arial, sans-serif; fill: #101010; }
.italic { font-style: italic; }
.tiny { font: 9px "Liberation Sans", Arial, sans-serif; fill: #404040; text-anchor: middle; }
.faint { font-size: 8px; fill: #808080; }

.with-icon .content { display: grid; grid-template-rows: 1fr auto 1fr; justify-items: center; padding: 0; }
.icon {
  grid-row: 2;
  width: 70px;
  height: 70px;
  background: linear-gradient(#fafafa, #c4c4c4 45%, #d4d4d4);
  border: 2px solid;
  border-color: #e8e8e8 #787878 #707070 #f4f4f4;
}
.note { grid-row: 3; align-self: end; justify-self: start; margin: 0 0 18px -8px; }
.sn { font: bold 20px "Liberation Sans", Arial, sans-serif; fill: #e8d8f0; text-anchor: middle; }
.dx { font: 30px "Liberation Sans", Arial, sans-serif; fill: #fff; }
.dx-x { font-size: 42px; font-weight: 700; }

.row { display: grid; align-items: center; white-space: nowrap; }
.clip { overflow: hidden; }
.row-sim { grid-template-columns: 129px 32px 36px 32px 42px; column-gap: 15px; margin-top: 23px; }
.row-sim .clip:first-child { margin-right: 41px; }
.row-ts { grid-template-columns: 166px 32px 1fr; column-gap: 15px; margin-top: 23px; }
.row-fatigue { grid-template-columns: 177px 32px 80px 32px auto; column-gap: 14px; margin-top: 23px; justify-content: start; }
.n-stress .content { grid-template-rows: auto auto; row-gap: 47px; padding: 33px 6px 0 0; align-content: start; }
.row-messages { grid-template-columns: 178px 171px; column-gap: 17px; justify-self: end; margin-right: 17px; }

input[type="checkbox"] { appearance: none; width: 32px; height: 32px; margin: 0; background: #fff; }
input[type="checkbox"]:checked::before {
  content: "";
  display: block;
  height: 32px;
  background: #141414;
  clip-path: polygon(18% 50%, 32% 42%, 43% 60%, 68% 15%, 80% 17%, 48% 86%, 38% 86%);
}

.btn {
  height: 55px;
  background: linear-gradient(#fff, #f2f2f2);
  border: 1px solid #d8d8d8;
  border-radius: 4px;
}

.panel { margin-top: 8px; height: 658px; background: #f0f0f0; padding: 3px; }
.toolbar { display: flex; gap: 5px; }
.toolbar .btn { width: 195px; height: 60px; border: 2px solid #d8d8d8; }
.grid-area { display: flex; gap: 11px; margin: 8px 0 0 3px; }
.table-clip { width: 895px; height: 490px; overflow: hidden; }
table { width: 955px; table-layout: fixed; border-collapse: separate; border-spacing: 0; color: #484848; }
.c-row { width: 280px; }
.c-val { width: 225px; }
th, td { height: 54px; padding: 0 0 0 6px; text-align: left; font-weight: 400; white-space: nowrap; border: 0 solid #484848; }
thead th { border-top-width: 3px; border-right-width: 4px; color: #303030; }
thead .last th { height: 64px; border-bottom: 10px double #484848; }
.corner { padding: 0 6px 4px 2px; border-right-width: 4px; border-bottom-width: 3px; }
.btn-wide { display: block; width: 100%; height: 60px; color: #909090; border: 2px solid #dedede; }
tbody th, tbody td { border-top-width: 3px; }
tbody tr:first-child th, tbody tr:first-child td { border-top-width: 0; height: 51px; }
tbody th { border-left-width: 4px; border-right: 11px double #484848; padding-left: 4px; }
tbody td { background: #fff; border-right-width: 4px; }
tbody .num { font-size: 24px; padding-left: 8px; }
sup { font-size: 14px; line-height: 14px; }

.arrow { display: grid; place-items: center; flex: none; }
.arrow path { fill: none; stroke: #686868; stroke-width: 6; }
.vscroll { display: flex; flex-direction: column; width: 28px; }
.vscroll .arrow, .vscroll .arrow svg { width: 28px; height: 18px; }
.track { flex: 1; background: #dcdcdc; border-radius: 8px; }
.thumb { background: linear-gradient(90deg, #b4b4b4, #c4c4c4); }
.grid-area .vscroll { margin: 175px 0 7px; gap: 14px; }
.grid-area .vscroll .track { border-radius: 0 0 8px 8px; }
.grid-area .thumb { height: 18px; }
.hscroll { display: flex; gap: 12px; margin: 12px 58px 0 289px; height: 28px; }
.hscroll .arrow, .hscroll .arrow svg { width: 18px; height: 28px; }
.hscroll .thumb { width: 224px; height: 28px; margin-left: 92px; border-radius: 12px; border: 2px solid #acacac; background: linear-gradient(#c4c4c4, #b8b8b8); }
.status { display: flex; gap: 13px; margin-top: 15px; white-space: nowrap; }

.n-audit .content { padding-top: 8px; }
.audit-view { display: flex; gap: 7px; }
.audit-text { width: 294px; height: 157px; padding: 10px 12px 0; background: #fff; color: #000; font-size: 46px; line-height: 63px; font-weight: 700; white-space: nowrap; }
.audit-view .vscroll { padding: 6px 0 5px; gap: 12px; }
.audit-view .thumb { height: 18px; background: #b4b4b4; }
.tabs { display: flex; height: 84px; border-top: 3px solid #606060; }
.tab { position: relative; height: 80px; color: #606060; }
.tab svg { position: absolute; inset: 0; width: 100%; height: 100%; }
.tab span { position: relative; }
.tab-run { width: 118px; color: #909090; }
.tab-post { width: 141px; }
.step { width: 35px; height: 80px; margin-left: 2px; display: grid; place-items: center; background: linear-gradient(#fff, #ececec); }
.step svg { width: 12px; height: 18px; }
```
